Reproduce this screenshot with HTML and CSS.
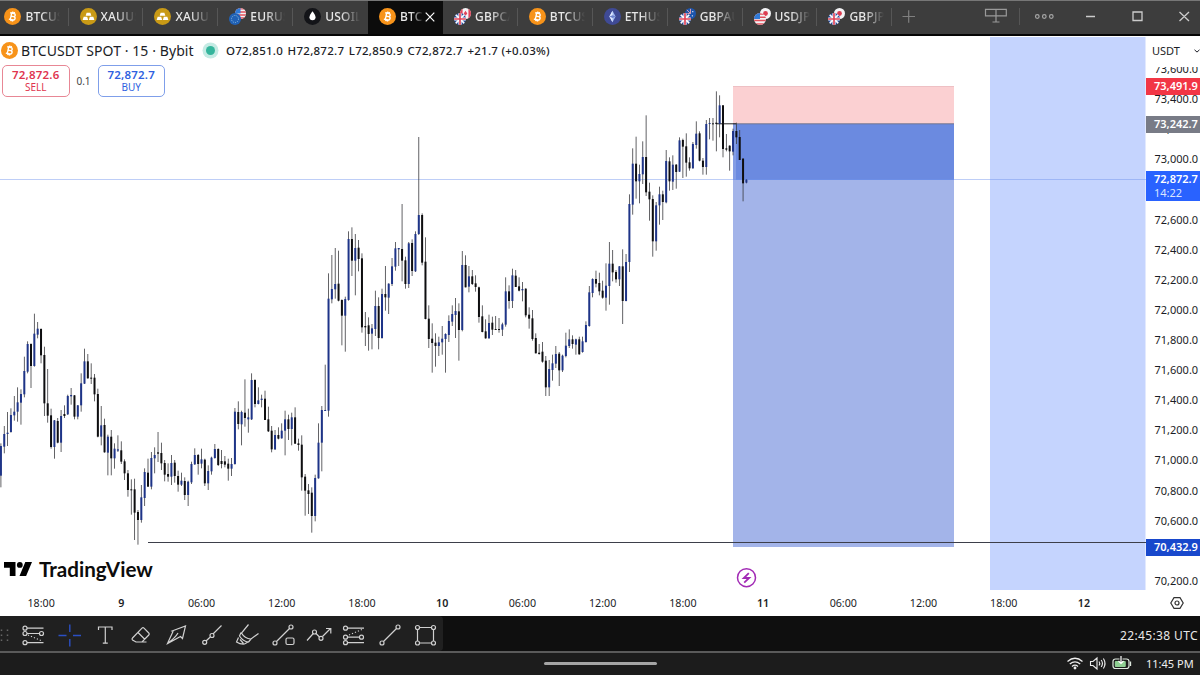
FILE: index.html
```html
<!DOCTYPE html>
<html lang="en">
<head>
    <meta charset="UTF-8">
    <meta name="viewport" content="width=device-width, initial-scale=1.0">
    <title>BTCUSDT 72,872.7</title>
    <link rel="stylesheet" href="styles.css">
</head>
<body>
    <svg width="0" height="0" class="defs">
        <symbol id="btc" viewBox="0 0 18 18">
            <circle cx="9" cy="9" r="9" fill="#f7931a"/>
            <g transform="rotate(12 9 9)" fill="none" stroke="#fff" stroke-width="1.5">
                <path d="M5.8 5.6h4.1a1.6 1.6 0 0 1 0 3.3H7.3h3a1.8 1.8 0 0 1 0 3.6H5.8M7.4 5.6v6.9M8.2 3.9v1.7M10 3.9v1.7M8.2 12.5v1.7M10 12.5v1.7"/>
            </g>
        </symbol>
        <symbol id="gold" viewBox="0 0 18 18">
            <circle cx="9" cy="9" r="9" fill="#c99a16"/>
            <path d="M7 5h4l1 3.3H6zM3.9 9.3h3.7l1 3.4H2.8zM10.4 9.3h3.7l1.1 3.4H9.4z" fill="#fff"/>
        </symbol>
        <symbol id="oil" viewBox="0 0 18 18">
            <circle cx="9" cy="9" r="9" fill="#131418"/>
            <path d="M9 3.5c2 2.7 3.2 4.4 3.2 6.4a3.2 3.2 0 0 1-6.4 0C5.8 7.9 7 6.2 9 3.5z" fill="#fff"/>
        </symbol>
        <symbol id="eth" viewBox="0 0 18 18">
            <circle cx="9" cy="9" r="9" fill="#3f4a95"/>
            <path d="M9 3l3.3 6L9 15 5.7 9z" fill="#9fb6ee"/>
            <path d="M9 3v12L5.7 9z" fill="#e4ebff"/>
            <path d="M5.7 9L9 10.6 12.3 9 9 7.6z" fill="#6b80cc"/>
        </symbol>
        <clipPath id="small"><circle cx="6" cy="6" r="6"/></clipPath>
        <symbol id="us" viewBox="0 0 12 12">
            <g clip-path="url(#small)">
                <path fill="#f3f3f5" d="M0 0h12v12H0z"/>
                <path stroke="#e2505c" stroke-width="1.5" d="M0 1h12M0 4.3h12M0 7.6h12M0 10.9h12"/>
                <path fill="#2f7ad8" d="M0 0h6v6H0z"/>
            </g>
        </symbol>
        <symbol id="gb" viewBox="0 0 12 12">
            <g clip-path="url(#small)">
                <path fill="#2b4f9e" d="M0 0h12v12H0z"/>
                <path stroke="#fff" stroke-width="1.6" d="M0 0l12 12M12 0L0 12"/>
                <path stroke="#fff" stroke-width="3.2" d="M6 0v12M0 6h12"/>
                <path stroke="#e0455a" stroke-width="1.7" d="M6 0v12M0 6h12"/>
            </g>
        </symbol>
        <symbol id="eu" viewBox="0 0 12 12">
            <circle cx="6" cy="6" r="6" fill="#2161b5"/>
            <circle cx="6" cy="6" r="3.5" fill="none" stroke="#8fc0e0" stroke-width="1" stroke-dasharray="1 1.2"/>
        </symbol>
        <symbol id="jp" viewBox="0 0 12 12">
            <circle cx="6" cy="6" r="6" fill="#f4f4f6"/>
            <circle cx="6" cy="6" r="2.6" fill="#dc3c50"/>
        </symbol>
        <symbol id="ca" viewBox="0 0 12 12">
            <g clip-path="url(#small)">
                <path fill="#f4f4f6" d="M0 0h12v12H0z"/>
                <path fill="#e0455a" d="M0 0h2.8v12H0zM9.2 0H12v12H9.200zM6 3l2 3-2 2.5L4 6z"/>
            </g>
        </symbol>
        <symbol id="au" viewBox="0 0 12 12">
            <circle cx="6" cy="6" r="6" fill="#1d55ac"/>
            <path d="M2 2l4 4M6 1v5H1" stroke="#e7a0ac" stroke-width="1" fill="none"/>
            <circle cx="8.5" cy="4" r=".7" fill="#fff"/>
            <circle cx="8" cy="8.5" r=".7" fill="#fff"/>
        </symbol>
    </svg>

    <header class="tab-bar">
        <div class="tab"><svg class="coin"><use href="#btc"/></svg><span>BTCUS</span></div>
        <div class="tab"><svg class="coin"><use href="#gold"/></svg><span>XAUUS</span></div>
        <div class="tab"><svg class="coin"><use href="#gold"/></svg><span>XAUUS</span></div>
        <div class="tab"><svg class="coin"><use href="#us" x="6" y="0" width="11" height="11"/><use href="#eu" x="0" y="5" width="12" height="12"/></svg><span>EURUS</span></div>
        <div class="tab before-active"><svg class="coin"><use href="#oil"/></svg><span>USOIL</span></div>
        <div class="tab active"><svg class="coin"><use href="#btc"/></svg><span>BTCU</span>
            <svg class="close" viewBox="0 0 10 10"><path d="M.7.7l8.6 8.6M9.3.7L.7 9.3"/></svg>
        </div>
        <div class="tab after-active"><svg class="coin"><use href="#ca" x="6" y="0" width="11" height="11"/><use href="#gb" x="0" y="5" width="12" height="12"/></svg><span>GBPCA</span></div>
        <div class="tab"><svg class="coin"><use href="#btc"/></svg><span>BTCUS</span></div>
        <div class="tab"><svg class="coin"><use href="#eth"/></svg><span>ETHUS</span></div>
        <div class="tab"><svg class="coin"><use href="#au" x="6" y="0" width="11" height="11"/><use href="#gb" x="0" y="5" width="12" height="12"/></svg><span>GBPAU</span></div>
        <div class="tab"><svg class="coin"><use href="#jp" x="6" y="0" width="11" height="11"/><use href="#us" x="0" y="5" width="12" height="12"/></svg><span>USDJP</span></div>
        <div class="tab"><svg class="coin"><use href="#jp" x="6" y="0" width="11" height="11"/><use href="#gb" x="0" y="5" width="12" height="12"/></svg><span>GBPJP</span></div>
        <svg class="window-icons" viewBox="892 0 308 34" fill="none">
            <path stroke="#808080" stroke-width="1.2" d="M902.5 16.5h12.5M908.7 10.3v12.5"/>
            <path stroke="#9a9a9a" stroke-width="1.2" d="M985.5 9.3h20.8v6.6h-20.8zM996 9.3v12.5M992.5 22h7"/>
            <path stroke="#555" d="M1019.5 8v17"/>
            <g stroke="#a5a5a5" stroke-width="1.2"><circle cx="1037.3" cy="16.5" r="1.8"/><circle cx="1044.3" cy="16.5" r="1.8"/><circle cx="1051.3" cy="16.5" r="1.8"/></g>
            <path stroke="#ccc" stroke-width="1.3" d="M1086 16.5h9M1133 12h9v8.5h-9zM1179.5 12l9.5 9M1189 12l-9.5 9"/>
        </svg>
    </header>

    <main class="workspace">
        <section class="chart">
            <svg class="plot" id="plot" viewBox="0 36 1146 554">
                <rect x="990" y="37" width="155.5" height="553" fill="#c5d4fe"/>
                <rect x="733" y="86" width="221" height="38" fill="#fbd0d2"/>
                <rect x="733" y="124" width="221" height="423" fill="#a3b4e9"/>
                <rect x="736" y="124" width="218" height="56" fill="#6b8ae0"/>
                <rect x="733" y="124" width="3" height="56" fill="#849de5"/>
                <path d="M733 86.5h221" stroke="#eec0c4"/>
                <path d="M733 123.8h221" stroke="#6d7290"/>
                <path d="M716 123.8h20" stroke="#222"/>
                <path d="M0 179.5h1146" stroke="#6f93ee" stroke-opacity=".45"/>
                <path d="M148 542.5h998" stroke="#3d3f4a"/>
                <g id="candles"></g>
                <g fill="none" stroke="#a22bb5" stroke-width="1.5">
                    <circle cx="746.5" cy="577.7" r="9"/>
                    <path d="M748.8 573.2l-5 4.8h5.4l-5 4.6" stroke-width="1.8"/>
                </g>
            </svg>
            <div class="legend">
                <svg class="coin"><use href="#btc"/></svg>
                <span class="symbol">BTCUSDT SPOT · 15 · Bybit</span>
                <i class="status"></i>
                <span class="ohlc">O72,851.0</span>
                <span class="ohlc">H72,872.7</span>
                <span class="ohlc">L72,850.9</span>
                <span class="ohlc">C72,872.7</span>
                <span class="ohlc">+21.7 (+0.03%)</span>
            </div>
            <div class="orders">
                <button class="sell"><b>72,872.6</b>SELL</button>
                <span>0.1</span>
                <button class="buy"><b>72,872.7</b>BUY</button>
            </div>
            <div class="brand">
                <svg viewBox="0 0 28 14"><path d="M0 0h11.5v14H5.8V5.7H0zM21.3 0H28l-5.9 14h-6.6z"/><circle cx="15.800" cy="2.9" r="2.9"/></svg>
                <span>TradingView</span>
            </div>
        </section>

        <aside class="price-axis">
            <div class="currency">USDT<svg viewBox="0 0 6 4"><path d="M.5.8L3 3.1 5.5.8"/></svg></div>
            <ul id="prices"></ul>
            <div class="tag stop">73,491.9</div>
            <div class="tag entry">73,242.7</div>
            <div class="tag last">72,872.7<small>14:22</small></div>
            <div class="tag target">70,432.9</div>
        </aside>
    </main>

    <div class="time-axis">
        <span>18:00</span><b>9</b><span>06:00</span><span>12:00</span><span>18:00</span><b>10</b><span>06:00</span><span>12:00</span><span>18:00</span><b>11</b><span>06:00</span><span>12:00</span><span>18:00</span><b>12</b>
        <svg class="settings" viewBox="0 0 14 12"><path d="M4 .7h6L13.2 6 10 11.3H4L.8 6z"/><circle cx="7" cy="6" r="2"/></svg>
    </div>

    <div class="toolbar">
        <svg class="tools" viewBox="0 616 443 35" fill="none">
            <path class="grip" d="M1.5 629.5v12M7.5 629.5v12"/>
            <g class="icon">
                <path d="M27 628.2h16.5M27 633.5h12.5M27 642.7h16.5"/>
                <path d="M28 635l14 6" stroke-dasharray="1.2 2"/>
                <circle cx="25" cy="628.2" r="2"/><circle cx="25" cy="633.5" r="2"/><circle cx="41.5" cy="633.5" r="2"/><circle cx="25" cy="642.7" r="2"/>
            </g>
            <path class="cross" d="M58.5 635.5h8M73 635.5h8M69.8 624.5v7.5M69.8 639v7.5"/>
            <path class="icon" d="M98.5 630v-3h13.5v3M105.3 627v16M102.8 643.2h5"/>
            <path class="icon" d="M132.5 638l9.5-9.8q1-1 2 0l4.8 4.8q1 1 0 2l-6.800 7h-6l-3.500-2q-1-1 0-2zM138 632.500l6.500 6.500M142 642h4.500"/>
            <path class="icon" d="M167.500 643.500l5.500-12-1-.5 13.500-5-3 12.500-2-2zM167.500 643.500q8-6 10.500-10.500"/>
            <g class="icon"><path d="M206 641l4-3.800M213 634l8.500-8.500"/><circle cx="204.700" cy="642.300" r="2"/><circle cx="212" cy="635.500" r="2"/></g>
            <path class="icon" d="M248.500 624.500l-7 8.500q3 5.500 9.500 6l7.500-5.500M241 632.500l-1.500 3.500q3.500 5.500 9 6l2.500-3M238.500 637.500l-2 4.500q4 2.500 8 2l3.500-2M240 639.500l3.500 4"/>
            <g class="icon"><path d="M276.500 641.500l13-13"/><circle cx="275" cy="643" r="2"/><circle cx="291" cy="627" r="2"/><rect x="286" y="638" width="8" height="6.500" rx="1.500"/></g>
            <g class="icon"><path d="M307 640.500l6.300-7M316 633.500l3.500 3.500M322.500 636.500l8-8M326 628.500h4.800v5"/><circle cx="314.500" cy="632" r="2"/><circle cx="321" cy="638.300" r="2"/></g>
            <g class="icon">
                <path d="M347.500 628.200H364M347.500 637.200h12M347.500 642.700H364"/>
                <path d="M349 635l13-5.500" stroke-dasharray="1.200 2"/>
                <circle cx="345.500" cy="628.200" r="2"/><circle cx="345.500" cy="637.200" r="2"/><circle cx="361.500" cy="637.200" r="2"/><circle cx="345.500" cy="642.700" r="2"/>
            </g>
            <g class="icon"><path d="M383.500 641.500l13-13"/><circle cx="382" cy="643" r="2"/><circle cx="398" cy="627" r="2"/></g>
            <g class="icon"><path d="M419.500 627.500h12M419.500 643h12M417.500 629.500v11.500M433.500 629.500v11.500"/><circle cx="417.500" cy="627.500" r="2"/><circle cx="433.500" cy="627.500" r="2"/><circle cx="417.500" cy="643" r="2"/><circle cx="433.500" cy="643" r="2"/></g>
        </svg>
        <span class="clock">22:45:38 UTC</span>
    </div>

    <footer class="system-bar">
        <i class="handle"></i>
        <svg class="tray" viewBox="1066 655 70 17" fill="none">
            <g stroke="#eee" stroke-width="1.3"><path d="M1067.5 661.5q7.500-6.500 15 0M1069.8 664q5.200-4.400 10.400 0M1072 666.400q3-2.400 6 0"/><circle cx="1075" cy="668" r=".8" fill="#eee"/></g>
            <path stroke="#eee" stroke-width="1.100" d="M1090.500 661.500h2.500l4-3.500v11l-4-3.500h-2.500zM1099 661.500q1.500 2 0 4M1101.200 660q2.500 3.500 0 7M1103.400 658.500q3.200 5 0 10"/>
            <rect x="1113" y="659" width="16" height="9.500" rx="2.500" stroke="#dfe8df" stroke-width="1.200"/>
            <path stroke="#dfe8df" stroke-width="1.300" d="M1130.500 661.500v4.500"/>
            <rect x="1114.800" y="661" width="11" height="6" rx="1" fill="#8fcf92"/>
            <path stroke="#1c1c1c" stroke-width="3" d="M1121 656v6"/>
            <path stroke="#fff" stroke-width="1.200" d="M1121 656v7M1118.500 661l2.500 2.500 2.500-2.500"/>
        </svg>
        <span>11:45 PM</span>
    </footer>

    <script src="script.js"></script>
</body>
</html>
```
FILE: styles.css
```css
* {
    box-sizing: border-box;
}
body {
    margin: 0;
    width: 1200px;
    height: 675px;
    overflow: hidden;
    display: flex;
    flex-direction: column;
    font-family: "Noto Sans", "Open Sans", sans-serif;
    background-color: #fff;
    color: #1b1d26;
}
svg {
    display: block;
    flex: none;
}
.defs {
    position: absolute;
}

/* tabs */
.tab-bar {
    display: flex;
    height: 36px;
    flex: none;
    background-color: #3d3d3d;
    border-top: 1px solid #777;
    border-bottom: 2px solid #050505;
}
.tab {
    display: flex;
    align-items: center;
    width: 74.900px;
    flex: none;
    padding-left: 11px;
    position: relative;
    font-size: 12px;
    font-weight: 500;
    letter-spacing: 0.2px;
    color: #e8e8e8;
}
.tab:first-child {
    width: 68.500px;
    padding-left: 4.400px;
}
.tab::after {
    content: "";
    position: absolute;
    right: 0;
    top: 7px;
    width: 1px;
    height: 18px;
    background-color: #565656;
}
.tab .coin {
    width: 17px;
    height: 17px;
    margin-right: 4px;
    margin-top: -2px;
}
.tab span {
    width: 35px;
    margin-top: -2px;
    overflow: hidden;
    white-space: nowrap;
    -webkit-mask-image: linear-gradient(90deg, #000 45%, transparent 100%);
    mask-image: linear-gradient(90deg, #000 45%, transparent 100%);
}
.tab.active {
    background-color: #0c0c0c;
}
.tab.active span {
    width: 24px;
}
.tab.active::after, .tab.before-active::after {
    display: none;
}
.close {
    width: 10px;
    height: 10px;
    margin-left: 1px;
    margin-top: -2px;
    fill: none;
    stroke: #fff;
    stroke-width: 1.2;
}
.window-icons {
    width: 308px;
    height: 34px;
    margin-top: -1px;
    margin-left: -0.400px;
}

/* chart */
.workspace {
    display: flex;
    height: 554px;
    flex: none;
}
.chart {
    position: relative;
    width: 1146px;
    height: 554px;
}
.plot {
    width: 1146px;
    height: 554px;
}
.legend {
    position: absolute;
    left: 1px;
    top: 4px;
    height: 20px;
    display: flex;
    align-items: center;
    white-space: nowrap;
}
.legend .coin {
    width: 17px;
    height: 17px;
    margin-right: 3px;
    margin-top: 1px;
}
.symbol {
    width: 174px;
    font-size: 14px;
    letter-spacing: 0.08px;
}
.status {
    width: 9px;
    height: 9px;
    margin: 1px 11.500px 0 10.500px;
    border-radius: 50%;
    background-color: #35b59c;
    box-shadow: 0 0 0 3.500px #c5ebe4;
}
.ohlc {
    font-size: 11.500px;
    font-weight: 500;
    letter-spacing: 0.260px;
    margin-right: 4.500px;
}
.orders {
    position: absolute;
    left: 2px;
    top: 29px;
    display: flex;
    align-items: center;
}
.orders span {
    width: 28px;
    text-align: center;
    font-size: 10px;
    color: #444;
}
.orders button {
    width: 67.500px;
    height: 32px;
    padding: 0;
    border-radius: 5px;
    background-color: #fff;
    font-family: inherit;
    font-size: 10px;
    line-height: 12px;
}
.orders b {
    display: block;
    font-size: 11.500px;
    font-weight: 600;
    letter-spacing: 0.200px;
}
.orders .sell {
    border: 1px solid #e88795;
    color: #e0344e;
}
.orders .buy {
    border: 1px solid #7f9fea;
    color: #2f5fe0;
}
.brand {
    position: absolute;
    left: 4px;
    bottom: 9px;
    display: flex;
    align-items: center;
    font-family: Lato, sans-serif;
    font-size: 20.600px;
    line-height: 24px;
    font-weight: 700;
    color: #0c0c0c;
}
.brand svg {
    width: 28px;
    height: 14px;
    margin-right: 7px;
}

/* price scale */
.price-axis {
    position: relative;
    width: 54px;
    height: 554px;
    overflow: hidden;
    font-size: 11px;
    white-space: nowrap;
}
.currency {
    position: relative;
    z-index: 1;
    display: flex;
    align-items: center;
    height: 31px;
    padding: 0 0 2px 6px;
    background-color: #fff;
}
.currency svg {
    width: 6px;
    height: 4px;
    margin-left: auto;
    fill: none;
    stroke: #1b1d26;
}
.price-axis ul {
    list-style: none;
    margin: -13px 0 0;
    padding: 0 0 0 8.500px;
}
.price-axis li {
    height: 30.120px;
    line-height: 30.120px;
}
.price-axis .covered {
    visibility: hidden;
}
.tag {
    position: absolute;
    left: 0;
    width: 54px;
    height: 17px;
    line-height: 16px;
    padding-left: 8px;
    color: #fff;
    font-weight: 600;
}
.tag small {
    display: block;
    font-size: 11px;
    font-weight: 400;
    line-height: 11px;
    color: #dbe5ff;
}
.stop {
    top: 42px;
    background-color: #f23645;
}
.entry {
    top: 80px;
    background-color: #787b86;
}
.last {
    top: 135px;
    height: 30px;
    background-color: #2962ff;
}
.target {
    top: 503px;
    background-color: #1848cc;
}

/* time scale */
.time-axis {
    display: flex;
    align-items: center;
    height: 26px;
    flex: none;
    padding-left: 1px;
    font-size: 10.700px;
}
.time-axis span, .time-axis b {
    width: 80.230px;
    flex: none;
    text-align: center;
}
.time-axis b {
    font-weight: 600;
}
.settings {
    width: 14px;
    height: 12px;
    margin-left: 46px;
    fill: none;
    stroke: #333;
    stroke-width: 1.2;
}

/* drawing toolbar */
.toolbar {
    display: flex;
    align-items: center;
    justify-content: space-between;
    height: 35px;
    flex: none;
    background-color: #0f0f0f;
}
.tools {
    width: 443px;
    height: 35px;
    background-color: #202020;
    border-radius: 0 4px 4px 0;
}
.icon {
    stroke: #d0d0d0;
    stroke-width: 1.2;
}
.cross {
    stroke: #2b4fc4;
    stroke-width: 1.4;
}
.grip {
    stroke: #666;
    stroke-width: 1.5;
    stroke-dasharray: 1.5 3.5;
}
.clock {
    padding-right: 2px;
    padding-top: 3px;
    font-size: 12px;
    letter-spacing: 0.380px;
    color: #e8e8e8;
}

/* system bar */
.system-bar {
    display: flex;
    align-items: center;
    height: 24px;
    flex: none;
    border-top: 2px solid #5a5a5a;
    background-color: #1c1c1c;
    color: #f0f0f0;
    font-size: 11px;
}
.system-bar span {
    margin-top: -1px;
}
.handle {
    width: 113px;
    height: 3px;
    margin-top: -1px;
    margin-left: 543.500px;
    border-radius: 2px;
    background-color: #a5a5a5;
}
.tray {
    width: 70px;
    height: 17px;
    margin-top: -2px;
    margin-left: 409.500px;
    margin-right: 10px;
}
```
FILE: script.js
```javascript
// price scale, the levels under the position labels stay blank
var prices = document.getElementById('prices');
for (var p = 73600; p >= 70200; p -= 200) {
    var li = document.createElement('li');
    if (p === 72800 || p === 70400) {
        li.className = 'covered';
    } else {
        li.textContent = p.toLocaleString('en-US', { minimumFractionDigits: 1 });
    }
    prices.appendChild(li);
}

// 15 minute bars: high, body top, body bottom, low, rising (1) or falling (0)
// heights are in thirds of a pixel below the top of each group
var groups = [
    { top: 300, bars: [
        [430,438,527,562,1],[378,402,440,460,1],[336,398,402,438,1],[325,345,396,398,1],[288,335,346,362,1],[262,307,335,365,1],
        [268,282,308,374,1],[170,213,283,292,1],[124,132,215,220,1],[130,132,198,264,0],[41,101,198,200,1],[66,86,104,115,1],
        [85,87,166,190,0],[140,165,310,348,0],[207,310,347,368,0],[326,346,441,446,0],[360,361,441,476,1],[354,363,428,430,0],
        [330,348,428,456,1],[316,342,348,354,0],[284,288,343,345,1],[264,285,289,314,1],[285,286,350,358,0],[315,316,350,358,1],
        [220,250,316,335,1],[146,184,251,252,1],[162,184,235,236,0],[190,233,235,252,0],[222,233,283,304,0],[266,282,410,412,0],
        [318,376,410,436,1],[356,375,457,458,0],[404,410,458,526,1],[390,410,475,526,0],[430,446,475,506,1],[406,448,452,456,1],
        [424,451,485,492,0],[478,484,520,540,0],[510,520,570,590,0],[538,568,570,644,0],[536,568,638,720,0],[630,636,660,734,0],
        [555,592,660,668,1],[505,516,594,618,1],[476,518,560,560,0],[456,474,560,568,1],[442,465,475,520,1],[396,457,461,486,0],
        [428,459,490,510,0],[480,489,524,544,0],[490,522,530,545,0],[465,489,530,555,1],[480,488,528,548,0],[512,528,554,575,0],
        [518,542,554,558,1],[532,543,585,600,0],[542,545,585,618,1],[485,492,547,552,1],[445,465,493,495,1],[462,465,492,524,0],
        [446,478,491,505,1],[476,479,550,558,0],[496,513,550,570,1],[470,473,514,524,1],[432,447,474,476,1],[445,447,495,498,0],
        [450,483,492,505,0],[468,484,494,502,0],[476,491,506,542,0],[474,492,506,528,1],[324,335,492,494,1],[304,336,372,388,0]
    ] },
    { top: 220, bars: [
        [572,576,613,676,1],[478,578,594,620,0],[566,592,598,638,1],[460,480,598,600,1],[478,480,552,562,0],[502,541,552,553,1],
        [524,536,540,562,1],[512,536,600,600,0],[560,598,634,636,0],[618,632,688,697,0],[630,645,688,690,1],[622,645,656,658,0],
        [610,632,655,656,1],[572,598,632,706,1],[584,598,627,660,0],[578,592,627,676,1],[562,592,671,672,0],[656,670,675,692,0],
        [646,674,772,812,0],[762,770,812,887,0],[792,811,822,882,0],[802,818,888,938,0],[764,774,888,904,1],[610,668,775,776,1],
        [558,570,668,754,1],[434,570,572,572,1],[160,236,572,590,1],[105,207,238,250,1],[84,192,208,236,1],[92,191,242,244,0],
        [238,240,287,376,0],[230,237,287,395,1],[34,57,240,242,1],[22,57,122,168,0],[42,84,122,226,1],[60,83,117,154,0],
        [100,115,322,338,0],[276,318,322,378,0],[292,316,342,392,0],[312,325,341,388,1],[212,258,327,348,1],[232,258,354,388,0],
        [206,222,354,356,1],[138,222,232,272,0],[190,191,233,282,1],[114,139,192,198,1],[66,85,140,152,1],[84,84,88,138,1],
        [-48,87,122,184,0],[110,121,192,206,0],[66,70,192,204,1],[58,69,153,168,0],[34,42,154,156,1],[-249,-15,42,45,1],
        [-20,-15,128,136,0],[52,125,297,298,0],[256,296,357,384,0],[310,356,369,458,0],[340,368,378,440,0],[350,367,378,408,1],
        [318,356,367,404,1],[340,342,357,458,1],[286,303,345,366,1],[256,282,305,318,1],[234,273,285,354,1],[250,274,330,422,0],
        [93,135,330,334,1],[106,135,202,202,0],[138,169,200,217,1],[150,169,192,195,0],[166,190,201,215,0],[200,202,291,308,0],
        [256,289,336,337,0],[298,334,355,356,0],[284,309,355,356,1],[290,308,329,345,0],[288,327,329,330,0],[294,327,329,338,0],
        [308,313,329,348,1],[172,214,314,320,1],[196,214,243,266,0],[146,166,243,264,1],[150,167,201,201,0],[172,199,212,214,0],
        [186,207,211,244,1],[205,206,286,292,0],[262,284,296,326,0],[270,295,357,362,0],[340,354,400,400,0],[372,398,402,404,0],
        [366,395,425,428,0],[408,422,502,528,0],[420,447,502,528,1],[404,430,450,482,1],[378,402,431,444,1],[396,401,451,498,0],
        [404,407,451,456,1],[338,377,408,412,1],[328,358,378,384,1],[346,358,372,386,0],[356,358,374,404,1],[350,358,403,404,0],
        [350,364,396,398,1],[304,315,366,368,1],[198,217,318,320,1],[175,177,219,232,1],[152,177,191,202,0],[158,189,214,226,0],
        [182,212,233,236,0],[130,197,233,272,1],[66,131,198,254,1],[90,131,157,184,0],[150,156,178,188,0],[138,139,178,198,1],
        [88,139,243,312,0],[102,126,243,244,1]
    ] },
    { top: 80, bars: [
        [343,372,546,576,1],[205,251,374,404,1],[170,251,304,356,0],[254,282,304,370,1],[184,231,283,312,1],[106,231,337,348,0],
        [308,335,358,422,0],[346,357,484,530,0],[366,376,484,512,1],[320,343,376,434,1],[332,343,366,420,0],[210,243,367,370,1],
        [232,244,304,332,0],[226,254,305,330,1],[252,254,276,326,0],[172,181,275,276,1],[176,180,200,294,0],[160,199,248,290,0],
        [232,247,265,272,0],[186,192,265,266,1],[124,161,195,206,1],[154,160,242,244,0],[234,242,261,284,0],[120,132,261,284,1],
        [114,129,132,178,1],[114,130,132,182,0],[34,128,132,214,0],[46,76,132,172,1],[75,76,207,232,0],[162,205,209,214,0],
        [196,197,214,272,0],[146,153,215,226,1],[128,153,172,192,0],[150,171,240,240,0],[234,236,310,364,0],[298,299,308,310,1]
    ] }
];

var layer = document.getElementById('candles');
var step = 3.343;
var x = 746.4 - step * 223;

function addRect(x, y, width, height, fill) {
    var rect = document.createElementNS('http://www.w3.org/2000/svg', 'rect');
    rect.setAttribute('x', x.toFixed(2));
    rect.setAttribute('y', y.toFixed(2));
    rect.setAttribute('width', width);
    rect.setAttribute('height', height.toFixed(2));
    rect.setAttribute('fill', fill);
    layer.appendChild(rect);
}

groups.forEach(function (group) {
    group.bars.forEach(function (bar) {
        addRect(x - 0.4, group.top + bar[0] / 3, 0.8, (bar[3] - bar[0]) / 3, '#3c3c40');
        addRect(x - 1, group.top + bar[1] / 3, 2, Math.max(1, (bar[2] - bar[1]) / 3), bar[4] ? '#1e3488' : '#0e0e10');
        x += step;
    });
});
```
